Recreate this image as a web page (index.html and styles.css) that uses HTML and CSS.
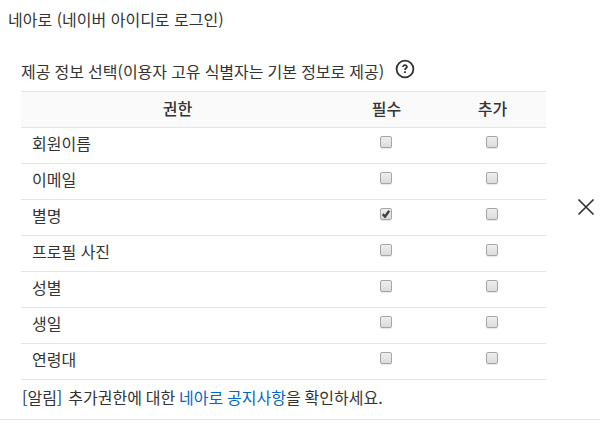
FILE: index.html
```html
<!DOCTYPE html>
<html lang="ko">
<head>
<meta charset="utf-8">
<title>네아로</title>
<link rel="stylesheet" href="styles.css">
</head>
<body>
<main class="panel">
  <h1 class="title">네아로 (네이버 아이디로 로그인)</h1>
  <div class="content">
    <section class="permissions">
      <div class="caption">
        <span>제공 정보 선택(이용자 고유 식별자는 기본 정보로 제공)</span>
        <svg class="help" viewBox="0 0 20 20"><circle cx="10" cy="10" r="8.4"/><path d="M8 7.9C8 5.6 12 5.6 11.9 8C11.8 9.4 10 9.3 10 11M10 12.3v1.7"/></svg>
      </div>
      <table class="table">
        <thead><tr><th class="name">권한</th><th class="required">필수</th><th class="extra">추가</th></tr></thead>
        <tbody>
          <tr><td>회원이름</td><td><span class="check"></span></td><td><span class="check"></span></td></tr>
          <tr><td>이메일</td><td><span class="check"></span></td><td><span class="check"></span></td></tr>
          <tr><td>별명</td><td><span class="check"><svg class="mark" viewBox="0 0 12 12"><path d="M2.7 6.2L5 8.6L9.2 2.8"/></svg></span></td><td><span class="check"></span></td></tr>
          <tr><td>프로필 사진</td><td><span class="check"></span></td><td><span class="check"></span></td></tr>
          <tr><td>성별</td><td><span class="check"></span></td><td><span class="check"></span></td></tr>
          <tr><td>생일</td><td><span class="check"></span></td><td><span class="check"></span></td></tr>
          <tr><td>연령대</td><td><span class="check"></span></td><td><span class="check"></span></td></tr>
        </tbody>
      </table>
      <p class="notice"><span class="tag">[알림]</span>추가권한에 대한 <a class="link">네아로 공지사항</a>을 확인하세요.</p>
    </section>
    <svg class="close" viewBox="0 0 18 18"><path d="M1.5 1.5L16.5 16.5M16.5 1.5L1.5 16.5"/></svg>
  </div>
</main>
</body>
</html>
```
FILE: styles.css
```css
* { box-sizing: border-box; }
body {
  margin: 0;
  background: #fff;
  color: #333;
  font: 16px/24px "Noto Sans CJK KR", sans-serif;
}
.panel { height: 420px; padding-top: 7px; border-bottom: 1px solid #e5e5e5; }
.title { margin: 0 0 0 8px; font-size: 16px; font-weight: 400; line-height: 24px; }
.content { display: flex; justify-content: space-between; align-items: center; padding: 26px 5px 0 21px; }
.permissions { width: 525px; }
.caption { display: flex; align-items: flex-start; gap: 11px; height: 34px; padding-top: 2px; white-space: nowrap; word-spacing: -0.4px; }
.help { width: 20px; height: 20px; fill: none; stroke: #333; stroke-width: 1.8; }
.table { width: 525px; border-collapse: separate; border-spacing: 0; table-layout: fixed; border-top: 1px solid #e5e5e5; }
.table th, .table td { height: 36px; padding: 0 0 3px; border-bottom: 1px solid #e5e5e5; text-align: center; }
.table th { padding-bottom: 4px; background: #fafafa; font-weight: 500; }
.table td:first-child { padding: 0 0 5px 11px; text-align: left; }
.name { width: 313px; }
.required { width: 105px; }
.check {
  display: block;
  width: 12px;
  height: 12px;
  margin: -5px auto 0;
  border: 1px solid #a6a6a6;
  border-radius: 2px;
  background: linear-gradient(#eee, #dcdcdc);
  box-shadow: 0 1px 1px #0000001a;
  transform: translateX(-1px);
}
.mark { display: block; width: 12px; height: 12px; margin: -1px; fill: none; stroke: #404040; stroke-width: 2.4; }
.notice { height: 39px; margin: 0; padding: 5px 0 0 1px; white-space: nowrap; word-spacing: -0.6px; }
.tag { margin-right: 6px; }
.link { color: #0068c3; }
.close { width: 18px; height: 18px; margin-top: -62px; fill: none; stroke: #333; stroke-width: 1.7; }
```
